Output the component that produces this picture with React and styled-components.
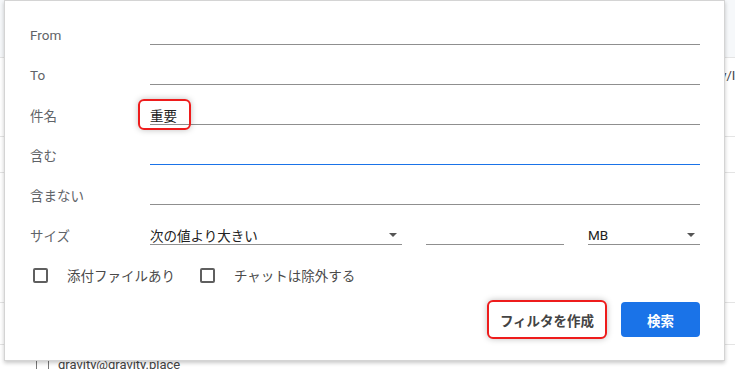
import styled, { createGlobalStyle } from 'styled-components'

const GlobalStyle = createGlobalStyle`
  html, body {
    margin: 0;
    padding: 0;
    background: #fff;
    overflow: hidden;
  }
  body {
    font-family: Roboto, "Noto Sans CJK JP", "Noto Sans", sans-serif;
    font-size: 13px;
    color: #222;
  }
`

const Page = styled.div`
  position: relative;
  width: 735px;
  height: 369px;
  overflow: hidden;
`

// the mail list that sits behind the search dialog
const Behind = styled.div`
  display: flex;
  flex-direction: column;
  height: 100%;
`

const BgRow = styled.div`
  height: ${p => p.h}px;
  flex: none;
  display: flex;
  align-items: ${p => p.align || 'center'};
  border-bottom: ${p => (p.line ? '1px solid #e4e4e4' : 'none')};
  background: ${p => p.bg || 'transparent'};
  box-sizing: border-box;
`

const BgText = styled.span`
  padding-left: ${p => p.left}px;
  white-space: nowrap;
  color: #444;
  font-size: 13px;
  margin-top: ${p => p.top || 0}px;
`

const BgCheck = styled.span`
  flex: none;
  width: 11px;
  height: 14px;
  margin-left: 36px;
  margin-top: 16px;
  border-left: 1px solid #777;
  border-right: 1px solid #777;
`

const Dialog = styled.div`
  position: absolute;
  left: 4px;
  top: 0;
  width: 721px;
  height: 361px;
  box-sizing: border-box;
  background: #fff;
  border: 1px solid #d4d4d4;
  box-shadow: 0 2px 4px rgba(0, 0, 0, 0.22);
  padding: 14px 24px 0 25px;
  display: flex;
  flex-direction: column;
`

const Row = styled.div`
  height: 40px;
  display: flex;
  align-items: center;
`

const Label = styled.div`
  width: 120px;
  flex: none;
  color: #5f6368;
  font-size: 13.5px;
`

const Field = styled.div`
  position: relative;
  flex: ${p => (p.w ? 'none' : '1')};
  width: ${p => (p.w ? `${p.w}px` : 'auto')};
  margin-right: ${p => p.mr || 0}px;
  height: 20px;
  box-sizing: border-box;
  border-bottom: 1px solid ${p => (p.active ? '#1a73e8' : '#8f8f8f')};
  display: flex;
  align-items: center;
  justify-content: space-between;
  color: #222;
  font-size: 13.5px;
`

const Arrow = styled.span`
  width: 0;
  height: 0;
  margin-right: 5px;
  border-left: 4px solid transparent;
  border-right: 4px solid transparent;
  border-top: 4px solid #555;
`

const Highlight = styled.div`
  position: absolute;
  left: -12px;
  top: -6px;
  width: 53px;
  height: 31px;
  box-sizing: border-box;
  border: 2px solid #ee1c1c;
  border-radius: 6px;
  box-shadow: 0 0 6px rgba(0, 0, 0, 0.25);
`

const CheckRow = styled.div`
  height: 40px;
  display: flex;
  align-items: center;
  padding-left: 3px;
`

const Check = styled.span`
  width: 11px;
  height: 11px;
  border: 2px solid #5f5f5f;
  border-radius: 2px;
  flex: none;
  margin-right: 19px;
`

const CheckLabel = styled.span`
  color: #4a4a4a;
  font-size: 13.5px;
  margin-right: ${p => p.mr || 0}px;
`

const Actions = styled.div`
  display: flex;
  justify-content: flex-end;
  align-items: center;
  gap: 14px;
  margin-top: 5px;
`

const Button = styled.button`
  font-family: inherit;
  font-size: 13.5px;
  font-weight: 600;
  cursor: pointer;
  border-radius: ${p => (p.primary ? 4 : 6)}px;
  width: ${p => (p.primary ? 79 : 120)}px;
  height: ${p => (p.primary ? 35 : 39)}px;
  background: ${p => (p.primary ? '#1a73e8' : '#fff')};
  color: ${p => (p.primary ? '#fff' : '#444')};
  border: ${p => (p.primary ? 'none' : '2px solid #ee1c1c')};
  box-shadow: ${p => (p.primary ? 'none' : '0 0 6px rgba(0,0,0,0.25)')};
  padding: 0;
`

export default function App() {
  return (
    <Page>
      <GlobalStyle />
      <Behind>
        <BgRow h={58} line bg="#f6f8fa" />
        <BgRow h={79} line align="flex-start">
          <BgText left={716} top={10}>ty/I</BgText>
        </BgRow>
        <BgRow h={36} line />
        <BgRow h={130} line />
        <BgRow h={42} line />
        <BgRow h={24} align="flex-start">
          <BgCheck />
          <BgText left={9} top={12}>gravity@gravity.place</BgText>
        </BgRow>
      </Behind>

      <Dialog>
        <Row>
          <Label>From</Label>
          <Field />
        </Row>
        <Row>
          <Label>To</Label>
          <Field />
        </Row>
        <Row>
          <Label>件名</Label>
          <Field>
            重要
            <Highlight />
          </Field>
        </Row>
        <Row>
          <Label>含む</Label>
          <Field active />
        </Row>
        <Row>
          <Label>含まない</Label>
          <Field />
        </Row>
        <Row>
          <Label>サイズ</Label>
          <Field w={252} mr={24}>
            次の値より大きい
            <Arrow />
          </Field>
          <Field w={138} mr={24} />
          <Field>
            MB
            <Arrow />
          </Field>
        </Row>
        <CheckRow>
          <Check />
          <CheckLabel mr={25}>添付ファイルあり</CheckLabel>
          <Check />
          <CheckLabel>チャットは除外する</CheckLabel>
        </CheckRow>
        <Actions>
          <Button>フィルタを作成</Button>
          <Button primary>検索</Button>
        </Actions>
      </Dialog>
    </Page>
  )
}
